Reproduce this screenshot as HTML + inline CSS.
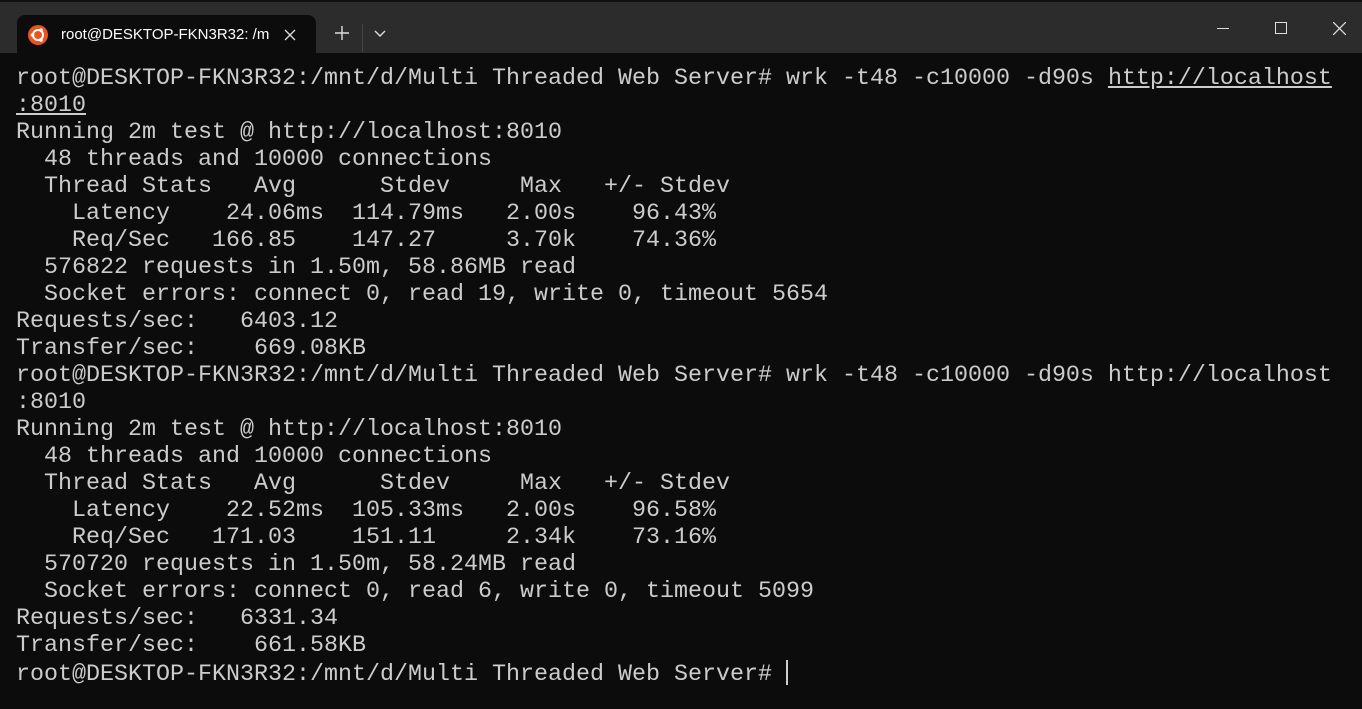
<!DOCTYPE html><html><head><style>
body{margin:0;width:1362px;height:709px;background:#0c0c0c;overflow:hidden;position:relative;font-family:"Liberation Sans",sans-serif}
.bar{position:absolute;left:0;top:0;width:1362px;height:53px;background:#2c2c2c;border-top:2px solid #111;box-sizing:border-box}
.tab{position:absolute;left:17px;top:13px;width:299px;height:40px;background:#0c0c0c;border-radius:8px 8px 0 0}
.tab .t{position:absolute;left:44px;top:11px;color:#fff;font-size:15px}
.ico{position:absolute;left:11px;top:10px;width:20px;height:20px;border-radius:50%;background:#e95420}
pre{position:absolute;left:16px;top:66px;margin:0;font-family:"Liberation Mono",monospace;font-size:23.33px;line-height:27px;color:#cccccc}
u{text-decoration:underline}
.cur{display:inline-block;width:2px;height:25px;background:#ccc;vertical-align:-5px}
</style></head><body>
<div class="bar">
<div class="tab"><div class="ico"><svg width="20" height="20" viewBox="0 0 20 20"><circle cx="10" cy="10" r="5" fill="none" stroke="#fff" stroke-width="2"/><circle cx="4.5" cy="10" r="1.8" fill="#fff"/><circle cx="13" cy="5" r="1.8" fill="#fff"/><circle cx="13" cy="15" r="1.8" fill="#fff"/></svg></div><div class="t">root@DESKTOP-FKN3R32: /m</div>
<svg style="position:absolute;left:267px;top:14px" width="12" height="12"><path d="M1 1L11 11M11 1L1 11" stroke="#ddd" stroke-width="1.3"/></svg></div>
<svg style="position:absolute;left:335px;top:24px" width="14" height="14"><path d="M7 0V14M0 7H14" stroke="#ddd" stroke-width="1.4"/></svg>
<div style="position:absolute;left:362px;top:22px;width:1px;height:28px;background:#444"></div>
<svg style="position:absolute;left:374px;top:28px" width="12" height="8"><path d="M1 1L6 6L11 1" stroke="#ddd" fill="none" stroke-width="1.4"/></svg>
<div style="position:absolute;left:1217px;top:26px;width:12px;height:1px;background:#ddd"></div>
<div style="position:absolute;left:1275px;top:20px;width:10px;height:10px;border:1px solid #ddd"></div>
<svg style="position:absolute;left:1333px;top:20px" width="13" height="13"><path d="M0 0L13 13M13 0L0 13" stroke="#ddd" stroke-width="1.3"/></svg>
</div>
<pre>root@DESKTOP-FKN3R32:/mnt/d/Multi Threaded Web Server# wrk -t48 -c10000 -d90s <u>http://localhost</u>
<u>:8010</u>
Running 2m test @ http://localhost:8010
  48 threads and 10000 connections
  Thread Stats   Avg      Stdev     Max   +/- Stdev
    Latency    24.06ms  114.79ms   2.00s    96.43%
    Req/Sec   166.85    147.27     3.70k    74.36%
  576822 requests in 1.50m, 58.86MB read
  Socket errors: connect 0, read 19, write 0, timeout 5654
Requests/sec:   6403.12
Transfer/sec:    669.08KB
root@DESKTOP-FKN3R32:/mnt/d/Multi Threaded Web Server# wrk -t48 -c10000 -d90s http://localhost
:8010
Running 2m test @ http://localhost:8010
  48 threads and 10000 connections
  Thread Stats   Avg      Stdev     Max   +/- Stdev
    Latency    22.52ms  105.33ms   2.00s    96.58%
    Req/Sec   171.03    151.11     2.34k    73.16%
  570720 requests in 1.50m, 58.24MB read
  Socket errors: connect 0, read 6, write 0, timeout 5099
Requests/sec:   6331.34
Transfer/sec:    661.58KB
root@DESKTOP-FKN3R32:/mnt/d/Multi Threaded Web Server# <span class="cur"></span></pre>
</body></html>
